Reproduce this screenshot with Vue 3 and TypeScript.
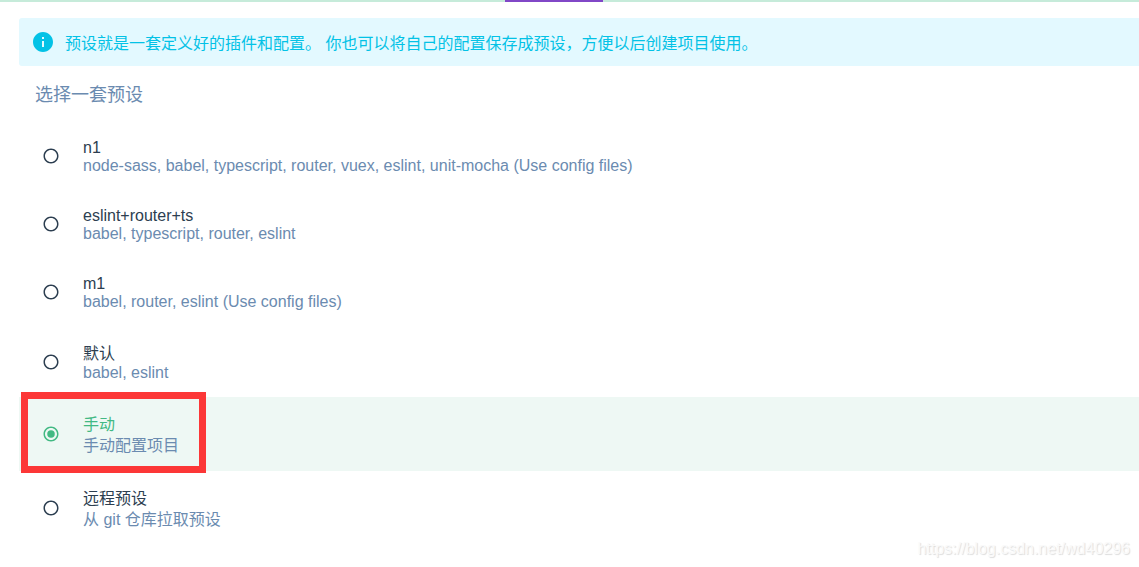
<script setup lang="ts">
interface Preset {
  name: string
  description: string
  cjkName?: boolean
  cjkDescription?: boolean
}

const selected = '手动'

const presets: Preset[] = [
  { name: 'n1', description: 'node-sass, babel, typescript, router, vuex, eslint, unit-mocha (Use config files)' },
  { name: 'eslint+router+ts', description: 'babel, typescript, router, eslint' },
  { name: 'm1', description: 'babel, router, eslint (Use config files)' },
  { name: '默认', description: 'babel, eslint', cjkName: true },
  { name: '手动', description: '手动配置项目', cjkName: true, cjkDescription: true },
  { name: '远程预设', description: '从 git 仓库拉取预设', cjkName: true, cjkDescription: true },
]
</script>

<template>
  <main class="page">
    <div class="tabs-line"><span class="indicator"></span></div>
    <section class="content">
      <div class="banner">
        <svg class="info-icon" viewBox="0 0 24 24">
          <path d="M12 2C6.48 2 2 6.48 2 12s4.48 10 10 10 10-4.48 10-10S17.52 2 12 2zm1 15h-2v-6h2v6zm0-8h-2V7h2v2z" />
        </svg>
        <span class="banner-text">预设就是一套定义好的插件和配置。 你也可以将自己的配置保存成预设，方便以后创建项目使用。</span>
      </div>
      <h2 class="title">选择一套预设</h2>
      <div class="list">
        <div
          v-for="preset in presets"
          :key="preset.name"
          class="preset"
          :class="{ selected: preset.name === selected }"
        >
          <svg class="radio" viewBox="0 0 24 24">
            <path d="M12 2C6.48 2 2 6.48 2 12s4.48 10 10 10 10-4.48 10-10S17.52 2 12 2zm0 18c-4.42 0-8-3.58-8-8s3.58-8 8-8 8 3.58 8 8-3.58 8-8 8z" />
            <circle v-if="preset.name === selected" cx="12" cy="12" r="5" />
          </svg>
          <div class="info">
            <div class="name" :class="{ cjk: preset.cjkName }">{{ preset.name }}</div>
            <div class="description" :class="{ cjk: preset.cjkDescription }">{{ preset.description }}</div>
          </div>
          <span v-if="preset.name === selected" class="highlight"></span>
        </div>
      </div>
    </section>
    <span class="watermark">https://blog.csdn.net/wd40296</span>
  </main>
</template>

<style>
body {
  margin: 0;
  background: #fff;
}
</style>

<style scoped>
.page {
  position: relative;
  height: 567px;
  overflow: hidden;
  font-family: "Liberation Sans", "Noto Sans CJK SC", sans-serif;
  font-size: 16px;
  color: #2c3e50;
}
.tabs-line {
  height: 2px;
  padding-left: 505px;
  background: #c6ebda;
}
.indicator {
  display: block;
  width: 98px;
  height: 2px;
  background: #8147c7;
}
.content {
  padding: 16px 0 0 19px;
}
.banner {
  display: flex;
  align-items: center;
  height: 48px;
  box-sizing: border-box;
  padding-left: 12px;
  border-radius: 3px 0 0 3px;
  background: #e3f9ff;
  color: #03c2e6;
}
.info-icon {
  width: 24px;
  height: 24px;
  margin-right: 10px;
  fill: #03c2e6;
}
.banner-text {
  line-height: 22px;
  padding-top: 4px;
  white-space: nowrap;
}
.title {
  box-sizing: border-box;
  margin: 0;
  height: 56px;
  padding: 1px 0 0 16px;
  font-size: 18px;
  line-height: 57px;
  font-weight: 400;
  color: #6b8bb0;
}
.preset {
  position: relative;
  display: flex;
  align-items: center;
  padding: 16px 16px 16px 23px;
}
.preset.selected {
  background: #eef8f4;
}
.radio {
  width: 18px;
  height: 18px;
  margin-right: 23px;
  fill: #2c3e50;
}
.info {
  padding-top: 1px;
  margin-bottom: -1px;
  white-space: nowrap;
}
.name,
.description {
  height: 18px;
  line-height: 18px;
}
.name.cjk,
.description.cjk {
  height: 21px;
  line-height: 21px;
}
.description {
  color: #6b8bb0;
}
.selected .name {
  color: #42b983;
}
.selected .radio {
  fill: #42b983;
}
.highlight {
  position: absolute;
  left: 2px;
  top: -5px;
  width: 185px;
  height: 81px;
  box-sizing: border-box;
  border: 7px solid #fc3737;
}
.watermark {
  position: absolute;
  right: 9px;
  bottom: 8px;
  line-height: 20px;
  color: #fafafa;
  text-shadow: 1px 1px 1px #dcdcdc;
}
</style>
